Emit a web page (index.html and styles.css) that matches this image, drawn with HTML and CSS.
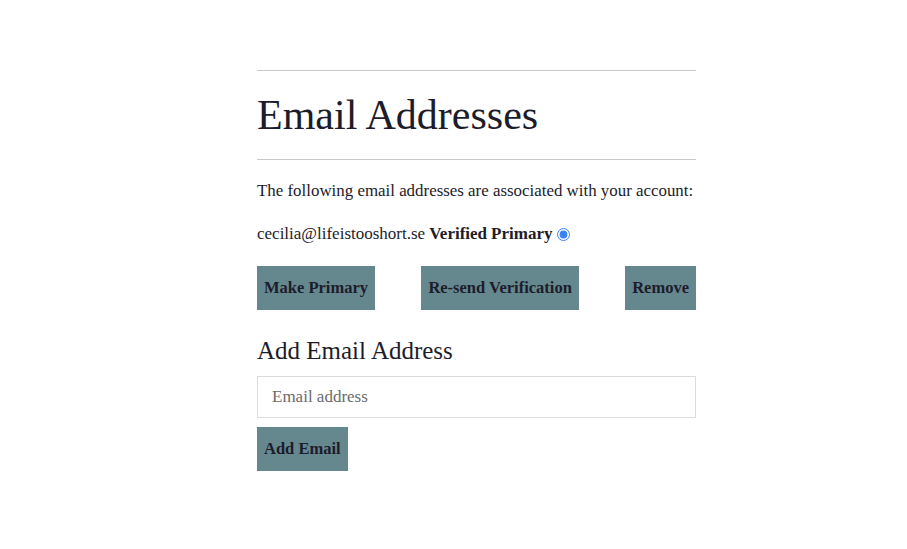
FILE: index.html
```html
<!DOCTYPE html>
<html>
<head>
<meta charset="utf-8">
<link rel="stylesheet" href="styles.css">
</head>
<body>
<main class="page">
  <hr class="rule">
  <h1 class="title">Email Addresses</h1>
  <hr class="rule">
  <p class="intro">The following email addresses are associated with your account:</p>
  <div class="email-row">
    <span>cecilia@lifeistooshort.se</span>
    <strong>Verified</strong>
    <strong>Primary</strong>
    <input class="radio" type="radio" checked>
  </div>
  <div class="actions">
    <button class="btn">Make Primary</button>
    <button class="btn">Re-send Verification</button>
    <button class="btn">Remove</button>
  </div>
  <h2 class="subtitle">Add Email Address</h2>
  <input class="field" type="email" placeholder="Email address">
  <div class="add-row"><button class="btn">Add Email</button></div>
</main>
</body>
</html>
```
FILE: styles.css
```css
html, body {
  margin: 0;
  background: #fff;
}
body {
  font-family: "Liberation Serif", "DejaVu Serif", serif;
  color: #1d1c2a;
  font-size: 17px;
}
.page {
  width: 439px;
  margin-left: 257px;
  padding-top: 70px;
}
.rule {
  border: 0;
  border-top: 1px solid #c8c8c8;
  margin: 0;
}
.title {
  font-weight: 400;
  font-size: 42px;
  line-height: 41px;
  margin: 0;
  padding: 24px 0 23px;
}
.intro {
  margin: 20px 0 0;
  line-height: 22px;
  font-size: 16.9px;
  white-space: nowrap;
}
.email-row {
  margin-top: 21px;
  line-height: 22px;
  display: flex;
  align-items: center;
  gap: 4px;
}
.radio {
  margin: 0 0 0 1px;
  width: 13px;
  height: 13px;
  accent-color: #3b82f6;
}
.actions {
  display: flex;
  justify-content: space-between;
  margin-top: 21px;
}
.btn {
  font-family: inherit;
  font-size: 16.5px;
  font-weight: 700;
  color: #1d1c2a;
  background: #65888f;
  border: 0;
  height: 44px;
  padding: 0 7px;
  border-radius: 0;
}
.subtitle {
  font-weight: 400;
  font-size: 25px;
  margin: 25px 0 0;
  line-height: 32px;
}
.field {
  display: block;
  box-sizing: border-box;
  width: 100%;
  height: 42px;
  margin-top: 9px;
  border: 1px solid #dcdcdc;
  padding: 0 14px;
  font-family: inherit;
  font-size: 17px;
  color: #1d1c2a;
}
.field::placeholder {
  color: #6b6b6b;
}
.add-row {
  margin-top: 9px;
}
```
